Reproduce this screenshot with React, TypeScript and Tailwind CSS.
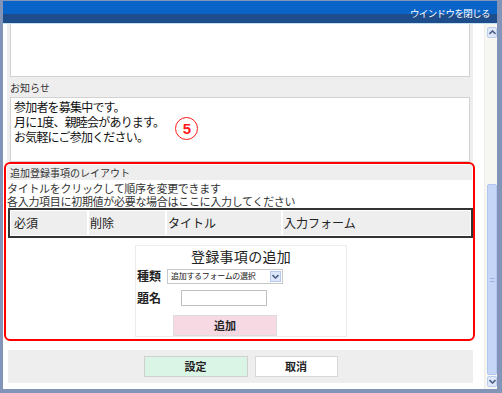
const font = { fontFamily: '"Noto Sans CJK JP", "Liberation Sans", sans-serif' };

const Chevron = ({ down }: { down?: boolean }) => (
  <svg width="7" height="5" viewBox="0 0 7 5" className={down ? "rotate-180" : ""}>
    <path d="M0.5 4 L3.5 1 L6.5 4" fill="none" stroke="#4d6185" strokeWidth="1.6" />
  </svg>
);

const App = () => {
  return (
    <div
      className="w-[502px] h-[393px] flex flex-col bg-white overflow-hidden border-[#8294b8] border-l-[3px] border-r-[5px] border-b-[4px] border-t-[1px]"
      style={font}
    >
      {/* Header */}
      <div className="h-[23px] shrink-0 flex items-center justify-end pr-[7px] bg-[linear-gradient(#0a64c8_0_13px,#1e4d8c_13px_22px,#c4e2f2_22px)]">
        <span className="text-[9.5px] text-white leading-none tracking-[-0.6px] mt-[3px]">ウインドウを閉じる</span>
      </div>

      <div className="flex-1 flex">
        {/* Content */}
        <div className="flex-1 flex flex-col">
          {/* Top panel */}
          <div className="ml-[4px] w-[466px] h-[138px] bg-[#eeeeee] flex flex-col">
            <div className="ml-[3px] w-[460px] h-[53px] bg-white border-x border-b border-[#d2d2d2]" />
            <div className="h-[20px] pl-[3px] flex items-center text-[10px] text-[#333]">お知らせ</div>
            <div className="relative ml-[3px] w-[460px] h-[65px] bg-white border border-[#d2d2d2] pl-[3px] pt-[1px] text-[12px] leading-[15px] tracking-[-0.8px] text-[#111]">
              <p>参加者を募集中です。</p>
              <p>月に1度、親睦会があります。</p>
              <p>お気軽にご参加ください。</p>
              <div className="absolute left-[164px] top-[19px] w-[23px] h-[23px] rounded-full border-[1.5px] border-[#ff1a1a] flex items-center justify-center text-[#ff1a1a] text-[15px] font-bold leading-none" style={{ fontFamily: '"Liberation Sans", sans-serif' }}>
                5
              </div>
            </div>
          </div>

          {/* Layout section (highlighted) */}
          <div className="ml-[1px] w-[471px] h-[179px] border-2 border-[#ff0000] rounded-[6px] flex flex-col">
            <div className="mt-[1px] mx-[1px] h-[15px] bg-[#eeeeee] pl-[3px] flex items-center text-[10px] text-[#333]">
              追加登録事項のレイアウト
            </div>
            <div className="pl-[1px] pt-[2px] text-[11px] leading-[13px] text-[#333] tracking-[-0.3px]">
              <p>タイトルをクリックして順序を変更できます</p>
              <p>各入力項目に初期値が必要な場合はここに入力してください</p>
            </div>
            <div className="ml-[2px] w-[465px] h-[30px] border-2 border-[#333] bg-white p-[1px] flex gap-[2px] text-[12px] text-[#222]">
              <div className="w-[76px] bg-[#eeeeee] flex items-center pl-[3px]">必須</div>
              <div className="w-[76px] bg-[#eeeeee] flex items-center pl-[1px]">削除</div>
              <div className="w-[114px] bg-[#eeeeee] flex items-center pl-[1px]">タイトル</div>
              <div className="flex-1 bg-[#eeeeee] flex items-center pl-[1px]">入力フォーム</div>
            </div>

            {/* Add item box */}
            <div className="ml-[129px] mt-[7px] w-[212px] h-[92px] border border-[#ececec] flex flex-col">
              <div className="h-[20px] flex items-center justify-center text-[14px] text-[#222] tracking-[0.3px]">登録事項の追加</div>
              <div className="mt-[2px] h-[16px] flex items-center pl-[1px]">
                <span className="text-[12px] font-bold text-[#222]">種類</span>
                <div className="ml-[6px] w-[116px] h-[15px] border border-[#c8c8c8] bg-white flex items-center">
                  <span className="flex-1 pl-[3px] text-[8px] text-[#222] leading-none tracking-[-0.3px]">追加するフォームの選択</span>
                  <div className="w-[11px] h-[11px] mr-[1px] bg-[#dde7fb] border border-[#b6c8ee] flex items-center justify-center">
                    <Chevron down />
                  </div>
                </div>
              </div>
              <div className="mt-[5px] h-[18px] flex items-center pl-[1px]">
                <span className="text-[12px] font-bold text-[#222]">題名</span>
                <div className="ml-[20px] w-[86px] h-[16px] border border-[#c0c0c0] bg-white" />
              </div>
              <div className="mt-[8px] ml-[37px] w-[104px] h-[21px] bg-[#f7d9e4] border border-[#dcdcdc] flex items-center justify-center text-[11px] font-bold text-[#222]">
                追加
              </div>
            </div>
          </div>

          {/* Bottom panel */}
          <div className="mt-[9px] ml-[5px] w-[465px] h-[33px] bg-[#eeeeee] flex items-center justify-center gap-[7px]">
            <div className="w-[104px] h-[21px] bg-[#daf5e6] border border-[#d0d0d0] flex items-center justify-center text-[11px] font-bold text-[#222]">
              設定
            </div>
            <div className="w-[83px] h-[21px] bg-white border border-[#d8d8d8] flex items-center justify-center text-[11px] font-bold text-[#222]">
              取消
            </div>
          </div>
        </div>

        {/* Scrollbar */}
        <div className="w-[13px] bg-[#f7f7f1] flex flex-col items-end border-l border-[#ededed]">
          <div className="mt-[3px] w-[10px] h-[11px] bg-[#dfe8fb] border border-[#bdcdee] rounded-[2px] flex items-center justify-center">
            <Chevron />
          </div>
          <div className="flex-1" />
          <div className="w-[10px] h-[191px] bg-[#c5d6f7] border border-[#b2c6ef] rounded-[2px] flex items-center justify-center">
            <div className="w-[5px] h-[4px] border-y border-[#9fb6e4]" />
          </div>
          <div className="mt-[1px] mb-[2px] w-[10px] h-[11px] bg-[#dfe8fb] border border-[#bdcdee] rounded-[2px] flex items-center justify-center">
            <Chevron down />
          </div>
        </div>
      </div>
    </div>
  );
};

export default App;
